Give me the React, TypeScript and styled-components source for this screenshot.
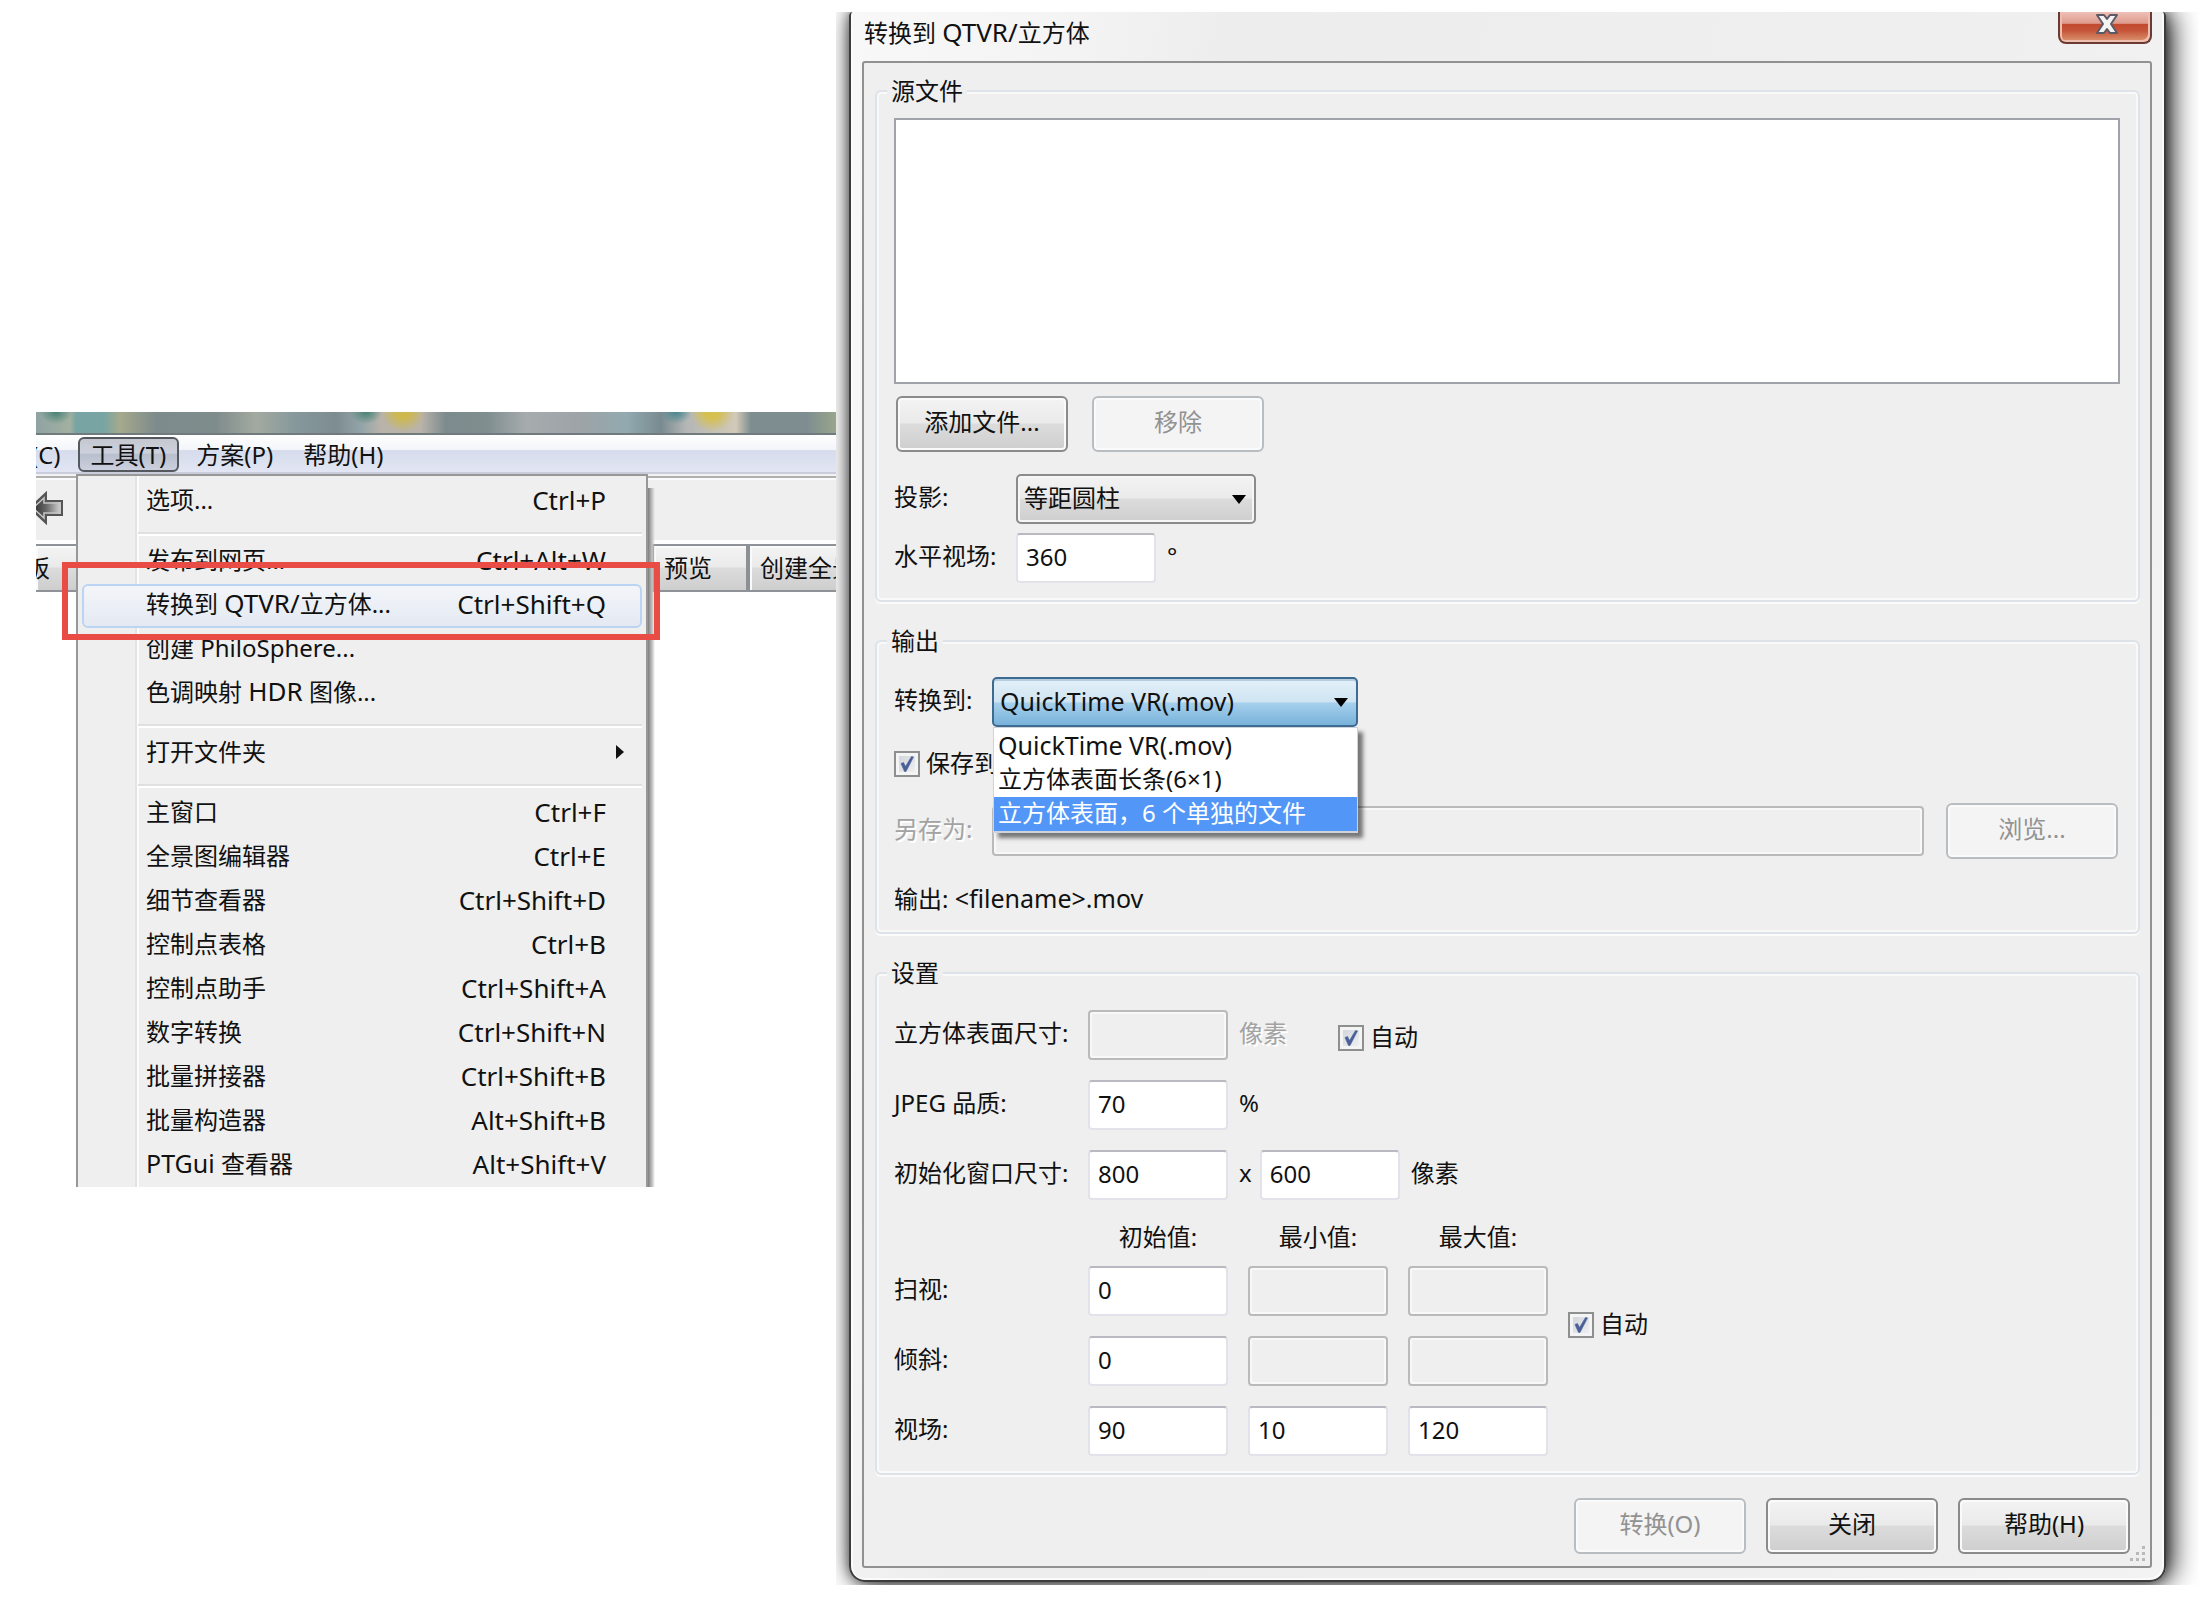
import React from "react";
import styled, { createGlobalStyle, css } from "styled-components";

const Global = createGlobalStyle`
  *, *::before, *::after { box-sizing: border-box; }
  body {
    margin: 0;
    background: #fff;
    color: #111;
    font: 24px/32px "Noto Sans", "Noto Sans CJK SC", sans-serif;
  }
  button, input, select { font: inherit; color: inherit; margin: 0; }
`;

const Page = styled.main`
  display: flex;
  align-items: flex-start;
  padding: 12px 0 12px 36px;
`;

const Latin = styled.span<{ $size?: number }>`
  font-size: ${(p) => p.$size ?? 26}px;
  line-height: 1;
`;

/* ---------- editor window with the tools menu ---------- */

const Editor = styled.section`
  position: relative;
  flex: 0 0 800px;
  min-width: 0;
  height: 775px;
  margin-top: 400px;
`;

const EditorClip = styled.div`
  height: 100%;
  overflow: hidden;
`;

const GlassStrip = styled.div`
  height: 23px;
  border-bottom: 2px solid #717a7c;
  background:
    radial-gradient(ellipse 22px 20px at 367px 0, #cdb94d 30%, transparent),
    radial-gradient(ellipse 22px 20px at 676px 0, #d6c04f 30%, transparent),
    radial-gradient(ellipse 16px 12px at 20px 0, #4f8578 10%, transparent),
    radial-gradient(ellipse 16px 12px at 330px 0, #4f8578 10%, transparent),
    radial-gradient(ellipse 16px 12px at 640px 0, #4f8a90 10%, transparent),
    linear-gradient(90deg, #8fa3a3 0, #a2b0a0 34px, #78a5a4 40px, #78a5a4 68px, #a6a98c 84px,
      #7d8b8c 120px, #7f8c8c 180px, #a3aaa0 220px, #86989b 260px, #7d8c90 300px, #93a4a8 325px,
      #b9b3aa 345px, #b9b3aa 385px, #7c8b8d 410px, #7f8d8e 450px, #a6abae 490px, #9da3a7 545px,
      #92aab0 590px, #798b90 625px, #b4b6b6 650px, #d2c9b8 700px, #7d8d90 715px, #7d8d90 770px, #99a58c 800px);
`;

const MenuBar = styled.nav`
  display: flex;
  gap: 4px;
  height: 39px;
  padding-top: 2px;
  border-bottom: 2px solid #c9cddc;
  background: linear-gradient(#fff 0, #f3f5f9 40%, #d6dcec 42%, #e2e6f4 100%);
`;

const MenuTitle = styled.button<{ $open?: boolean; $cut?: boolean }>`
  height: 35px;
  padding: 0 11px;
  border: 2px solid ${(p) => (p.$open ? "#55585f" : "transparent")};
  border-radius: 6px;
  background: ${(p) => (p.$open ? "linear-gradient(#c5c8cf, #cdd1dd 45%, #b9bfcd 50%, #ccd0de)" : "transparent")};
  line-height: 30px;
  white-space: nowrap;
  ${(p) =>
    p.$cut &&
    css`
      margin-left: -18px;
    `}
`;

const ToolBar = styled.div`
  display: flex;
  align-items: center;
  height: 70px;
  border-top: 2px solid #f2f2f2;
  border-bottom: 4px solid #fff;
  background: #efefef;
  box-shadow: inset 0 2px #b0b0b0, inset 0 4px #fbfbfb;
`;

const TabStrip = styled.div`
  display: flex;
  height: 48px;
  border: solid #8f9298;
  border-width: 2px 0;
  background: linear-gradient(#f4f4f4 0, #eaeaea 48%, #dcdcdc 50%, #cecece 100%);
`;

const Tab = styled.button<{ $width: number }>`
  flex: 0 0 ${(p) => p.$width}px;
  padding: 0 10px;
  border: 0;
  border-right: 4px solid #8c8f96;
  background: transparent;
  box-shadow: inset 2px 0 #fafafa, inset 0 2px #fafafa;
  line-height: 42px;
  text-align: left;
  white-space: nowrap;
  overflow: hidden;
`;

const CutTab = styled(Tab)`
  padding: 0;
  text-indent: -10px;
`;

const PopupMenu = styled.div`
  position: absolute;
  top: 62px;
  left: 40px;
  width: 572px;
  height: 713px;
  padding: 4px;
  border: 2px solid #979797;
  border-bottom: 0;
  background:
    linear-gradient(90deg, transparent 57px, #e2e3e3 57px, #e2e3e3 59px, #fcfcfc 59px, #fcfcfc 61px, transparent 61px),
    #efefef;
  overflow: hidden;
`;

const PopupShadow = styled.div`
  position: absolute;
  top: 76px;
  left: 612px;
  width: 7px;
  height: 699px;
  background: linear-gradient(90deg, #7d7d7d, #c4c4c4 60%, transparent);
`;

const Item = styled.button<{ $active?: boolean }>`
  display: flex;
  align-items: center;
  justify-content: space-between;
  width: 100%;
  height: 44px;
  padding: 0 34px 4px 62px;
  border: 2px solid ${(p) => (p.$active ? "#bcd4f3" : "transparent")};
  border-radius: 6px;
  background: ${(p) => (p.$active ? "linear-gradient(#f3f5f9, #e4e9f2)" : "transparent")};
  line-height: 36px;
  white-space: nowrap;
`;

const Keys = styled.kbd`
  font: inherit;
  font-size: 26px;
`;

const Rule = styled.hr`
  height: 4px;
  margin: 8px 0 4px 56px;
  border: 0;
  border-top: 2px solid #e0e0e0;
  background: #fff;
`;

const SubArrow = styled.svg`
  margin-right: -18px;
`;

const Marker = styled.div`
  position: absolute;
  top: 150px;
  left: 26px;
  width: 598px;
  height: 78px;
  border: 6px solid #e84c45;
  pointer-events: none;
`;

/* ---------- conversion dialog ---------- */

const Stage = styled.section`
  flex: 1;
  min-width: 0;
  padding: 0 32px 3px 13px;
  overflow: hidden;
`;

const Dialog = styled.form`
  padding: 0 12px 12px 11px;
  border: 2px solid #3c3c3c;
  border-top: 0;
  border-radius: 4px 4px 16px 16px;
  background: linear-gradient(100deg, #f8f8f8 0, #f4f4f4 14%, #ededed 24%, #efefef 70%, #f3f3f3 100%);
  box-shadow: inset 2px 0 #fbfbfb, inset -2px -2px #fbfbfb, 5px 0 28px 0 rgba(0, 0, 0, 0.95), 0 0 12px rgba(0, 0, 0, 0.45);
`;

const TitleBar = styled.header`
  display: flex;
  justify-content: space-between;
  align-items: flex-start;
  height: 49px;
`;

const Title = styled.h1`
  margin: 0;
  padding: 0 2px;
  font-size: 24px;
  font-weight: 400;
  line-height: 42px;
`;

const CloseButton = styled.button`
  display: flex;
  align-items: center;
  justify-content: center;
  width: 94px;
  height: 32px;
  padding: 0 0 6px 4px;
  border: 2px solid #6b3a33;
  border-top: 0;
  border-radius: 0 0 8px 8px;
  background: linear-gradient(#eec0b7 0, #dd9a8c 38%, #c2492d 40%, #c5553a 62%, #dc9873 100%);
  box-shadow: inset 2px 0 #eebfb0, inset -2px -2px #eebfb0;
`;

const Panel = styled.div`
  position: relative;
  display: flex;
  flex-direction: column;
  gap: 23px;
  padding: 12px 10px 12px 11px;
  border: 2px solid #919191;
  border-radius: 3px;
  background: #efefef;
`;

const Group = styled.fieldset`
  min-width: 0;
  margin: 0;
  padding: 0;
  border: 2px solid #dde3e9;
  border-radius: 6px;
  box-shadow: inset 0 0 0 2px #f9f9f9, 0 2px #fbfbfb;
`;

const Legend = styled.legend`
  margin-left: 10px;
  padding: 0 4px;
  background: #efefef;
`;

const GroupBody = styled.div<{ $top: number }>`
  padding: ${(p) => p.$top}px 18px 17px 17px;
`;

const Row = styled.div<{ $gap?: number; $top?: number; $left?: number }>`
  display: flex;
  align-items: center;
  gap: ${(p) => p.$gap ?? 0}px;
  margin-top: ${(p) => p.$top ?? 0}px;
  padding-left: ${(p) => p.$left ?? 0}px;
`;

const FileList = styled.select`
  display: block;
  width: 100%;
  height: 266px;
  border: 2px solid #a0a4aa;
  border-radius: 0;
  background: #fff;
  outline: 0;
`;

const Label = styled.label<{ $width?: number; $dim?: boolean }>`
  flex: 0 0 ${(p) => (p.$width ? p.$width + "px" : "auto")};
  padding-bottom: 4px;
  white-space: nowrap;
  ${(p) =>
    p.$dim &&
    css`
      color: #a3a3a3;
      text-shadow: 2px 2px #fff;
    `}
`;

const Unit = styled.span<{ $dim?: boolean }>`
  padding: 0 8px 4px 11px;
  white-space: nowrap;
  ${(p) =>
    p.$dim &&
    css`
      color: #a3a3a3;
      text-shadow: 2px 2px #fff;
    `}
`;

const PushButton = styled.button`
  flex: 0 0 172px;
  height: 56px;
  padding: 0 0 4px;
  border: 2px solid #8a8b8b;
  border-radius: 6px;
  background: linear-gradient(#f3f3f3 0, #eaeaea 48%, #dcdcdc 50%, #cecece 100%);
  box-shadow: inset 0 0 0 2px #fafafa;
  &:disabled {
    border-color: #b8bdc2;
    background: #f4f4f4;
    color: #929292;
  }
`;

const Field = styled.input<{ $wide?: boolean }>`
  flex: ${(p) => (p.$wide ? "1 1 0" : "0 0 140px")};
  width: 140px;
  min-width: 0;
  height: 50px;
  padding: 0 8px 4px;
  border: 2px solid #e2e3ea;
  border-top-color: #b9bac1;
  border-radius: 4px;
  background: #fff;
  &:disabled {
    border-color: #bababa;
    background: #efefef;
    box-shadow: inset 0 0 0 2px #f8f8f8;
  }
`;

const Combo = styled.div<{ $width: number }>`
  position: relative;
  flex: 0 0 ${(p) => p.$width}px;
`;

const ComboBox = styled.select<{ $open?: boolean }>`
  appearance: none;
  display: block;
  width: 100%;
  height: 50px;
  padding: 0 32px 2px 6px;
  border: 2px solid ${(p) => (p.$open ? "#3d6b91" : "#8a8b8b")};
  border-radius: 5px;
  background: ${(p) =>
    p.$open
      ? "linear-gradient(#e3f0f8 0, #cfe4f2 50%, #a6d0ec 52%, #78b2da 100%)"
      : "linear-gradient(#f3f3f3 0, #eaeaea 48%, #dcdcdc 50%, #cecece 100%)"};
  box-shadow: ${(p) => (p.$open ? "inset 0 2px #b5cedf" : "inset 0 0 0 2px #f6f6f6")};
  font-size: ${(p) => (p.$open ? 25 : 24)}px;
`;

const ComboArrow = styled.svg`
  position: absolute;
  top: 21px;
  right: 10px;
  pointer-events: none;
`;

const DropList = styled.ul`
  position: absolute;
  z-index: 2;
  top: 50px;
  left: 1px;
  right: 0;
  margin: 0;
  padding: 1px 0 0;
  border: solid #cfd3da;
  border-width: 1px 1px 2px;
  background: #fff;
  box-shadow: 5px 5px 4px rgba(0, 0, 0, 0.5);
  list-style: none;
`;

const Option = styled.li<{ $active?: boolean; $size?: number }>`
  height: 34px;
  padding-left: 4px;
  background: ${(p) => (p.$active ? "#5297f7" : "transparent")};
  color: ${(p) => (p.$active ? "#fff" : "inherit")};
  font-size: ${(p) => p.$size ?? 24}px;
  line-height: 32px;
  white-space: nowrap;
`;

const Tick = styled.label`
  display: flex;
  align-items: center;
  gap: 6px;
  height: 26px;
  white-space: nowrap;
`;

const TickText = styled.span`
  padding-bottom: 2px;
`;

const TickBox = styled.input`
  appearance: none;
  width: 26px;
  height: 26px;
  border: 2px solid #8e8f8f;
  background:
    url("data:image/svg+xml,%3Csvg xmlns='http://www.w3.org/2000/svg' viewBox='0 0 22 22'%3E%3Cpath d='M5 10.5 L7.5 9.5 L9.5 13.5 L15.5 3.5 L17.5 4 L10 18.5 L8.5 18.5 Z' fill='%234a5f97' stroke='%234a5f97' stroke-width='.6'/%3E%3C/svg%3E") center / 22px 22px no-repeat,
    linear-gradient(135deg, #cdd1d6, #f3f4f6);
  box-shadow: inset 0 0 0 3px #f4f4f4;
`;

const SaveBox = styled.div`
  display: flex;
  flex: 1;
  align-items: center;
  gap: 22px;
  padding-right: 2px;
`;

const FaceAuto = styled.div`
  padding: 6px 0 0 43px;
`;

const PanoHead = styled.div`
  display: flex;
  gap: 20px;
  margin-top: 20px;
  padding-left: 194px;
  line-height: 34px;
`;

const PanoTitle = styled.span`
  flex: 0 0 140px;
  text-align: center;
`;

const Pano = styled.div`
  display: flex;
  align-items: flex-start;
  gap: 20px;
`;

const PanoRows = styled.div`
  display: flex;
  flex-direction: column;
  gap: 20px;
  margin-top: 12px;
`;

const PanoRow = styled.div`
  display: flex;
  align-items: center;
`;

const PanoFields = styled.div`
  display: flex;
  gap: 20px;
`;

const PanoAuto = styled.div`
  margin-top: 58px;
`;

const Footer = styled.footer`
  display: flex;
  justify-content: flex-end;
  gap: 20px;
  padding-right: 10px;
`;

const Grip = styled.svg`
  position: absolute;
  right: 4px;
  bottom: 4px;
`;

type MenuEntry = { text: React.ReactNode; keys?: string; active?: boolean; sub?: boolean } | null;

const ENTRIES: MenuEntry[] = [
  { text: "选项...", keys: "Ctrl+P" },
  null,
  { text: "发布到网页...", keys: "Ctrl+Alt+W" },
  { text: <>转换到 <Latin>QTVR/</Latin>立方体...</>, keys: "Ctrl+Shift+Q", active: true },
  { text: "创建 PhiloSphere..." },
  { text: <>色调映射 <Latin>HDR</Latin> 图像...</> },
  null,
  { text: "打开文件夹", sub: true },
  null,
  { text: "主窗口", keys: "Ctrl+F" },
  { text: "全景图编辑器", keys: "Ctrl+E" },
  { text: "细节查看器", keys: "Ctrl+Shift+D" },
  { text: "控制点表格", keys: "Ctrl+B" },
  { text: "控制点助手", keys: "Ctrl+Shift+A" },
  { text: "数字转换", keys: "Ctrl+Shift+N" },
  { text: "批量拼接器", keys: "Ctrl+Shift+B" },
  { text: "批量构造器", keys: "Alt+Shift+B" },
  { text: <><Latin $size={25}>PTGui</Latin> 查看器</>, keys: "Alt+Shift+V" },
];

const PANO = [
  { id: "pan", label: "扫视:", values: ["0", null, null] },
  { id: "tilt", label: "倾斜:", values: ["0", null, null] },
  { id: "fov", label: "视场:", values: ["90", "10", "120"] },
];

function Arrow() {
  return (
    <ComboArrow width="14" height="9" viewBox="0 0 14 9">
      <path d="M0 0h14L7 9z" fill="#000" />
    </ComboArrow>
  );
}

function AutoTick({ text }: { text: string }) {
  return (
    <Tick>
      <TickBox type="checkbox" defaultChecked />
      <TickText>{text}</TickText>
    </Tick>
  );
}

function EditorWindow() {
  return (
    <Editor>
      <EditorClip>
        <GlassStrip />
        <MenuBar>
          <MenuTitle $cut>(C)</MenuTitle>
          <MenuTitle $open>工具(T)</MenuTitle>
          <MenuTitle>方案(P)</MenuTitle>
          <MenuTitle>帮助(H)</MenuTitle>
        </MenuBar>
        <ToolBar>
          <svg width="28" height="36" viewBox="0 0 28 36">
            <defs>
              <linearGradient id="back" x1="0" x2="1">
                <stop offset="0" stopColor="#222" />
                <stop offset=".5" stopColor="#666" />
                <stop offset="1" stopColor="#ddd" />
              </linearGradient>
            </defs>
            <path d="M-6 18 10 3v8h16v14H10v8z" fill="url(#back)" stroke="#555" strokeWidth="2" />
            <path d="M-3 18 8 8v5h16v10H8v5z" fill="none" stroke="#c4c4c4" strokeWidth="1.5" />
          </svg>
        </ToolBar>
        <TabStrip>
          <CutTab $width={618}>板</CutTab>
          <Tab $width={96}>预览</Tab>
          <Tab $width={120}>创建全景</Tab>
        </TabStrip>
      </EditorClip>
      <PopupShadow />
      <PopupMenu role="menu">
        {ENTRIES.map((e, i) =>
          e ? (
            <Item key={i} type="button" role="menuitem" $active={e.active}>
              <span>{e.text}</span>
              {e.keys && <Keys>{e.keys}</Keys>}
              {e.sub && (
                <SubArrow width="8" height="14" viewBox="0 0 8 14">
                  <path d="M0 0v14l8-7z" fill="#111" />
                </SubArrow>
              )}
            </Item>
          ) : (
            <Rule key={i} />
          )
        )}
      </PopupMenu>
      <Marker />
    </Editor>
  );
}

function SourceGroup() {
  return (
    <Group>
      <Legend>源文件</Legend>
      <GroupBody $top={11}>
        <FileList multiple aria-label="源文件" />
        <Row $gap={24} $top={12} $left={2}>
          <PushButton type="button">添加文件...</PushButton>
          <PushButton type="button" disabled>移除</PushButton>
        </Row>
        <Row $top={22}>
          <Label htmlFor="projection" $width={122}>投影:</Label>
          <Combo $width={240}>
            <ComboBox id="projection">
              <option>等距圆柱</option>
            </ComboBox>
            <Arrow />
          </Combo>
        </Row>
        <Row $top={9}>
          <Label htmlFor="hfov" $width={122}>水平视场:</Label>
          <Field id="hfov" defaultValue="360" />
          <Unit>°</Unit>
        </Row>
      </GroupBody>
    </Group>
  );
}

function OutputGroup() {
  return (
    <Group>
      <Legend>输出</Legend>
      <GroupBody $top={20}>
        <Row>
          <Label htmlFor="format" $width={98}>转换到:</Label>
          <Combo $width={366}>
            <ComboBox id="format" $open>
              <option>QuickTime VR(.mov)</option>
            </ComboBox>
            <Arrow />
            <DropList role="listbox">
              <Option role="option" $size={25}>QuickTime VR(.mov)</Option>
              <Option role="option">立方体表面长条(6×1)</Option>
              <Option role="option" $active>立方体表面，6 个单独的文件</Option>
            </DropList>
          </Combo>
        </Row>
        <Row $top={24}>
          <AutoTick text="保存到" />
        </Row>
        <Row $top={26}>
          <Label htmlFor="target" $width={98} $dim>另存为:</Label>
          <SaveBox>
            <Field id="target" $wide disabled />
            <PushButton type="button" disabled>浏览...</PushButton>
          </SaveBox>
        </Row>
        <Row $top={24}>
          <span>输出: <Latin $size={25}>&lt;filename&gt;.mov</Latin></span>
        </Row>
      </GroupBody>
    </Group>
  );
}

function SettingsGroup() {
  return (
    <Group>
      <Legend>设置</Legend>
      <GroupBody $top={21}>
        <Row>
          <Label htmlFor="face" $width={194}>立方体表面尺寸:</Label>
          <Field id="face" disabled />
          <Unit $dim>像素</Unit>
          <FaceAuto>
            <AutoTick text="自动" />
          </FaceAuto>
        </Row>
        <Row $top={20}>
          <Label htmlFor="quality" $width={194}>JPEG 品质:</Label>
          <Field id="quality" defaultValue="70" />
          <Unit>%</Unit>
        </Row>
        <Row $top={20}>
          <Label htmlFor="winw" $width={194}>初始化窗口尺寸:</Label>
          <Field id="winw" defaultValue="800" />
          <Unit>x</Unit>
          <Field aria-label="高" defaultValue="600" />
          <Unit>像素</Unit>
        </Row>
        <PanoHead>
          <PanoTitle>初始值:</PanoTitle>
          <PanoTitle>最小值:</PanoTitle>
          <PanoTitle>最大值:</PanoTitle>
        </PanoHead>
        <Pano>
          <PanoRows>
            {PANO.map((r) => (
              <PanoRow key={r.id}>
                <Label htmlFor={r.id} $width={194}>{r.label}</Label>
                <PanoFields>
                  {r.values.map((v, i) => (
                    <Field key={i} id={i === 0 ? r.id : undefined} aria-label={i ? r.label : undefined} defaultValue={v ?? ""} disabled={v === null} />
                  ))}
                </PanoFields>
              </PanoRow>
            ))}
          </PanoRows>
          <PanoAuto>
            <AutoTick text="自动" />
          </PanoAuto>
        </Pano>
      </GroupBody>
    </Group>
  );
}

export default function App() {
  return (
    <>
      <Global />
      <Page>
        <EditorWindow />
        <Stage>
          <Dialog onSubmit={(e) => e.preventDefault()}>
            <TitleBar>
              <Title>转换到 <Latin>QTVR/</Latin>立方体</Title>
              <CloseButton type="button" aria-label="关闭窗口">
                <svg width="22" height="20" viewBox="0 0 22 20">
                  <path d="M1 1h7l3 4 3-4h7l-6 9 6 9h-7l-3-4-3 4H1l6-9z" fill="#f3f3f3" stroke="#5d5a68" strokeWidth="2" strokeLinejoin="round" />
                </svg>
              </CloseButton>
            </TitleBar>
            <Panel>
              <SourceGroup />
              <OutputGroup />
              <SettingsGroup />
              <Footer>
                <PushButton type="submit" disabled>转换(O)</PushButton>
                <PushButton type="button">关闭</PushButton>
                <PushButton type="button">帮助(H)</PushButton>
              </Footer>
              <Grip width="16" height="16" viewBox="0 0 16 16">
                <path d="M12 0h3v3h-3zM12 6h3v3h-3zM12 12h3v3h-3zM6 6h3v3H6zM6 12h3v3H6zM0 12h3v3H0z" fill="#b9b9b9" />
              </Grip>
            </Panel>
          </Dialog>
        </Stage>
      </Page>
    </>
  );
}
